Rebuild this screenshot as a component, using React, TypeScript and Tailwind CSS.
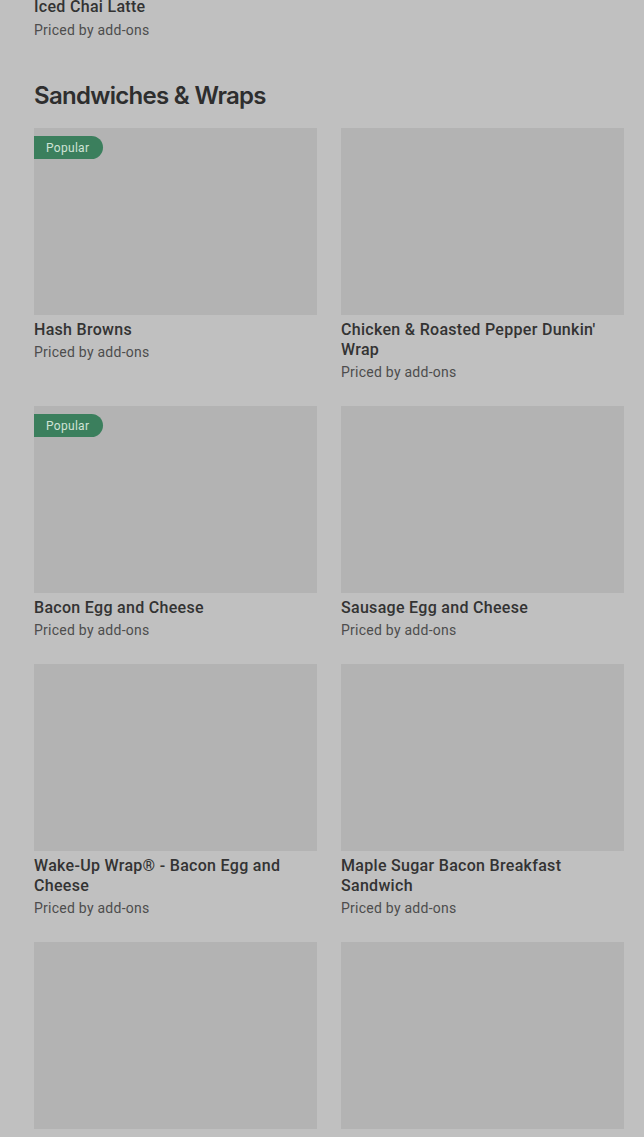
import React from "react";

type Item = { name: string; popular?: boolean };

const items: Item[] = [
  { name: "Hash Browns", popular: true },
  { name: "Chicken & Roasted Pepper Dunkin' Wrap" },
  { name: "Bacon Egg and Cheese", popular: true },
  { name: "Sausage Egg and Cheese" },
  { name: "Wake-Up Wrap® - Bacon Egg and Cheese" },
  { name: "Maple Sugar Bacon Breakfast Sandwich" },
  { name: "Wake-Up Wrap® - Sausage Egg and Cheese" },
  { name: "Muffin Bites" },
];

function Card({ item }: { item: Item }) {
  return (
    <div className="flex flex-col">
      <div className="relative h-[187px] w-full bg-[#b3b3b3]">
        {item.popular && (
          <span className="absolute left-0 top-[8px] flex h-[23px] items-center rounded-r-full bg-[#3b7f5d] pl-[12px] pr-[14px] text-[12px] tracking-[0.3px] text-[#cfe3d6]">
            Popular
          </span>
        )}
      </div>
      <div className="mt-[5px] text-[16px] font-medium leading-5 tracking-[0.3px] text-[#333333]">{item.name}</div>
      <div className="mt-[2px] text-[14px] leading-5 tracking-[0.25px] text-[#4d4d4d]">Priced by add-ons</div>
    </div>
  );
}

export default function App() {
  return (
    <div
      className="min-h-[1137px] w-full overflow-hidden bg-[#c0c0c0] pl-[34px] pr-[20px]"
      style={{ fontFamily: "Roboto, 'Noto Sans', sans-serif" }}
    >
      <div className="-mt-[3px]">
        <div className="text-[16px] font-medium leading-5 tracking-[0.3px] text-[#333333]">Iced Chai Latte</div>
        <div className="mt-[3px] text-[14px] leading-5 tracking-[0.25px] text-[#4d4d4d]">Priced by add-ons</div>
      </div>
      <h2
        className="mt-[40px] text-[24px] font-semibold leading-8 tracking-[-0.7px] text-[#2e2e2e]"
        style={{ fontFamily: "Inter, 'Noto Sans', sans-serif" }}
      >
        Sandwiches &amp; Wraps
      </h2>
      <div className="mt-[16px] grid grid-cols-2 gap-x-[24px] gap-y-[24px]">
        {items.map((it) => (
          <Card key={it.name} item={it} />
        ))}
      </div>
    </div>
  );
}
